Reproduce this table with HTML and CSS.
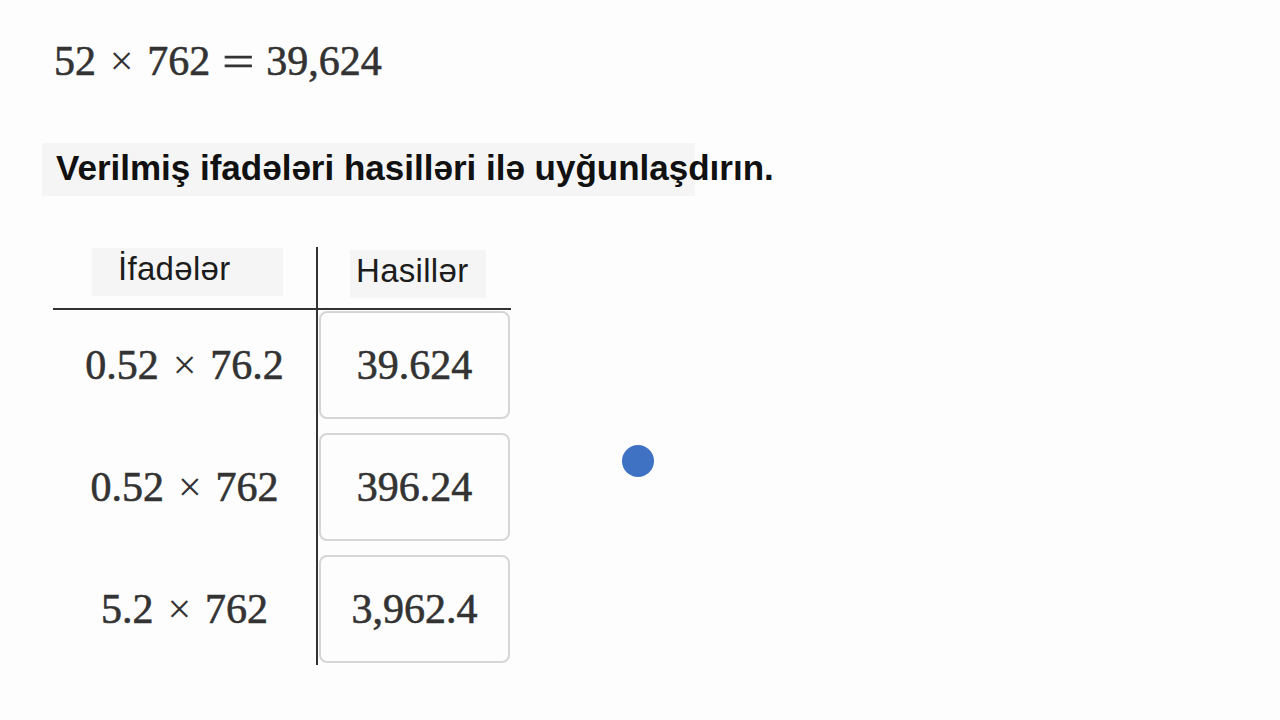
FILE: index.html
```html
<!DOCTYPE html>
<html lang="az">
<head>
<meta charset="utf-8">
<title>Hasillər</title>
<link rel="stylesheet" href="styles.css">
</head>
<body>
<main class="page">
  <div class="equation math">52<span class="op">×</span>762<span class="rel">=</span>39,624</div>

  <div class="prompt">Verilmiş ifadələri hasilləri ilə uyğunlaşdırın.</div>

  <div class="table">
    <div class="col col-expr">
      <div class="head"><span class="head-label head-label-expr">İfadələr</span></div>
      <div class="body">
        <div class="cell math">0.52<span class="op">×</span>76.2</div>
        <div class="cell math">0.52<span class="op">×</span>762</div>
        <div class="cell math">5.2<span class="op">×</span>762</div>
      </div>
    </div>
    <div class="col col-prod">
      <div class="head"><span class="head-label head-label-prod">Hasillər</span></div>
      <div class="body">
        <div class="card math">39.624</div>
        <div class="card math">396.24</div>
        <div class="card math">3,962.4</div>
      </div>
    </div>
  </div>

  <span class="cursor-dot"></span>
</main>
</body>
</html>
```

FILE: styles.css
```css
html, body {
  margin: 0;
  padding: 0;
  background: #fdfdfd;
}

.page {
  position: relative;
  width: 1280px;
  height: 720px;
  overflow: hidden;
  padding-top: 36px;
  box-sizing: border-box;
}

.math {
  font-family: "Liberation Serif", "Times New Roman", serif;
  font-size: 42px;
  color: #333333;
  -webkit-text-stroke: 0.6px #333333;
  white-space: nowrap;
}

.op {
  display: inline-block;
  width: 0.778em;
  margin: 0 0.222em;
  text-align: center;
  -webkit-text-stroke: 0;
}

.rel {
  display: inline-block;
  width: 0.778em;
  margin: 0 0.278em;
  text-align: center;
  transform: scaleX(1.35);
}

.equation {
  margin-left: 54px;
  line-height: 50px;
  height: 50px;
}

.prompt {
  margin-top: 57px;
  margin-left: 42px;
  width: 653px;
  box-sizing: border-box;
  padding: 5px 0 8px 14px;
  background: #f5f5f5;
  font-family: "Liberation Sans", Arial, sans-serif;
  font-weight: bold;
  font-size: 35px;
  line-height: 40px;
  color: #111111;
  white-space: nowrap;
}

.table {
  display: flex;
  margin-top: 51px;
  margin-left: 53px;
}

.col {
  display: flex;
  flex-direction: column;
}

.col-expr {
  width: 263px;
  border-right: 2px solid #333333;
  padding-bottom: 2px;
}

.col-prod {
  width: 193px;
}

.head {
  height: 61px;
  border-bottom: 2px solid #333333;
  display: flex;
  align-items: flex-start;
}

.head-label {
  display: block;
  background: #f5f5f5;
  font-family: "Liberation Sans", Arial, sans-serif;
  font-size: 33px;
  letter-spacing: 0.3px;
  line-height: 42px;
  color: #1c1c1c;
  padding-bottom: 6px;
  box-sizing: border-box;
  white-space: nowrap;
}

.head-label-expr {
  margin-left: 39px;
  margin-top: 1px;
  width: 191px;
  padding-left: 26px;
}

.head-label-prod {
  margin-left: 32px;
  margin-top: 3px;
  width: 136px;
  padding-left: 6px;
}

.body {
  display: flex;
  flex-direction: column;
  gap: 14px;
  padding-top: 1px;
}

.cell {
  height: 108px;
  display: flex;
  align-items: center;
  justify-content: center;
}

.card {
  height: 108px;
  width: 191px;
  margin-left: 1px;
  box-sizing: border-box;
  border: 2px solid #d6d6d6;
  border-radius: 8px;
  background: #fdfdfd;
  display: flex;
  align-items: center;
  justify-content: center;
}

.cursor-dot {
  position: absolute;
  left: 622px;
  top: 445px;
  width: 32px;
  height: 32px;
  border-radius: 50%;
  background: #3f72c3;
}
```
